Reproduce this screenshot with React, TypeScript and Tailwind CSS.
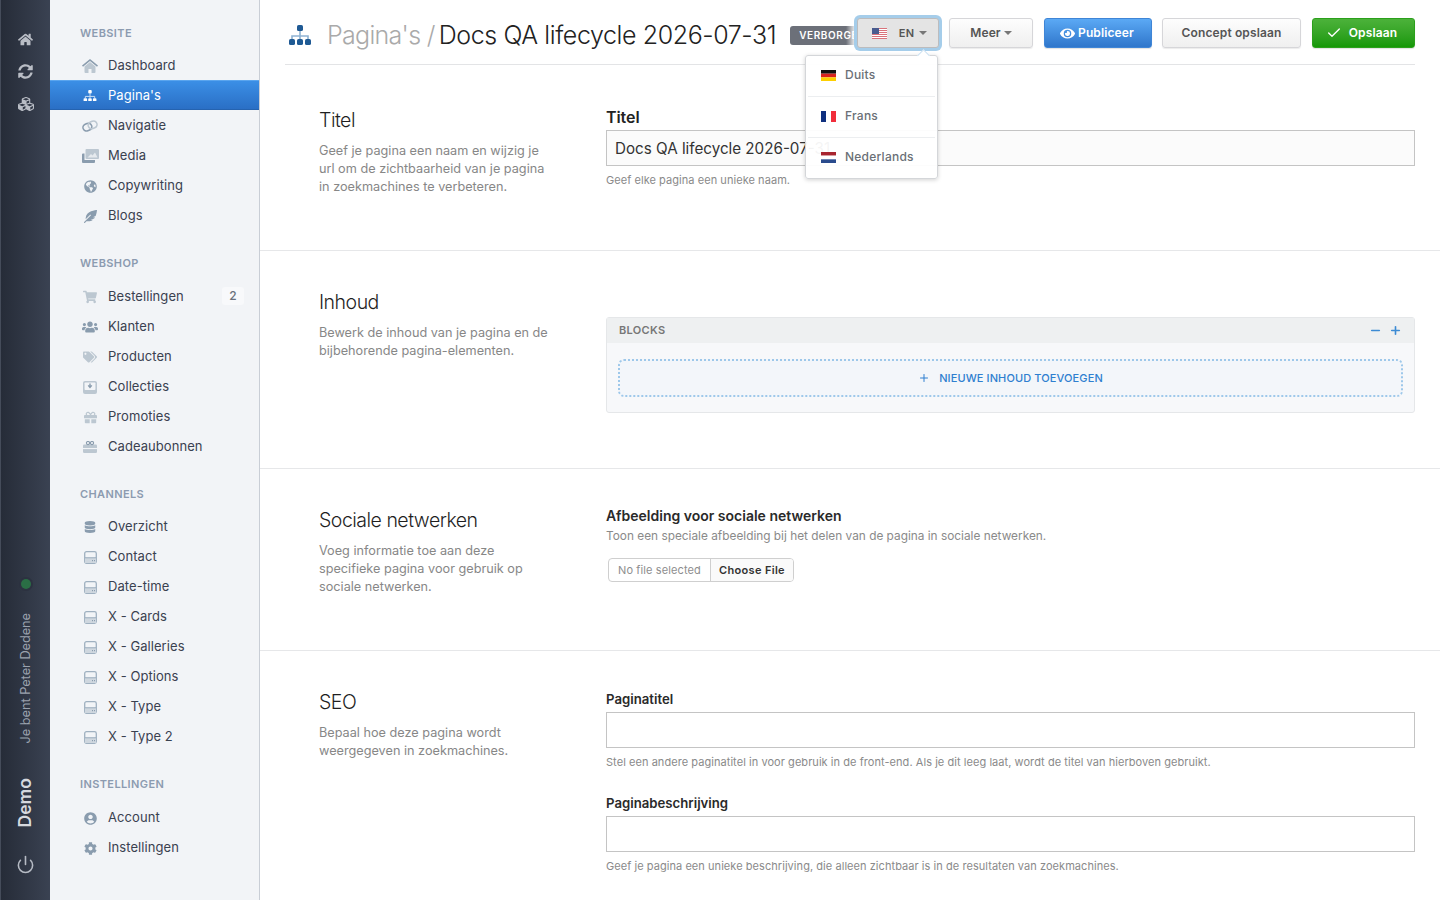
import React from "react";
import { FaHome, FaSyncAlt, FaCubes, FaGlobeAmericas, FaFeatherAlt, FaShoppingCart, FaUsers, FaTags, FaGift, FaUserCircle, FaCog, FaDatabase, FaEye } from "react-icons/fa";
import { FiPower, FiCheck, FiPlus, FiMinus } from "react-icons/fi";

const D = "#8a9cae";
const L = "#bcc7d1";

function Sitemap({ top = "#1f5a94", line = "#8fb3d3", size = 24 }: { top?: string; line?: string; size?: number }) {
  return (
    <svg width={size} height={(size * 20) / 24} viewBox="0 0 24 20">
      <path d="M12 6v5M4 14v-3h16v3M12 11v3" fill="none" stroke={line} strokeWidth="1.6" />
      <rect x="9" y="0" width="6" height="6" rx="1.6" fill={top} />
      <rect x="1" y="14" width="6" height="6" rx="1.6" fill={top} />
      <rect x="9" y="14" width="6" height="6" rx="1.6" fill={top} />
      <rect x="17" y="14" width="6" height="6" rx="1.6" fill={top} />
    </svg>
  );
}
function DuoHome() {
  return (
    <svg width="16" height="14" viewBox="0 0 16 14">
      <path d="M2.5 7.5 8 3l5.5 4.5V13a1 1 0 0 1-1 1h-3v-4h-3v4h-3a1 1 0 0 1-1-1z" fill={L} />
      <path d="M8 0 0 6.5l1 1.2L8 2l7 5.7 1-1.2z" fill={D} />
    </svg>
  );
}
function DuoLink() {
  return (
    <svg width="16" height="12" viewBox="0 0 16 12" fill="none">
      <rect x="0.9" y="3.6" width="9" height="7" rx="3.5" transform="rotate(-22 5.4 7.1)" stroke={D} strokeWidth="1.5" />
      <rect x="6.1" y="1.4" width="9" height="7" rx="3.5" transform="rotate(-22 10.6 4.9)" stroke={L} strokeWidth="1.5" />
    </svg>
  );
}
function DuoImages() {
  return (
    <svg width="17" height="14" viewBox="0 0 17 14">
      <rect x="3.5" y="0" width="13.5" height="10" rx="1" fill={L} />
      <path d="M5.5 8.5 9 5l1.5 1.5L13 3.5l2.5 5z" fill="#e6eaee" />
      <path d="M0 5.5a1 1 0 0 1 1-1h1.5V11h10.5v2a1 1 0 0 1-1 1H1a1 1 0 0 1-1-1z" fill={D} />
    </svg>
  );
}
function DuoInbox() {
  return (
    <svg width="14" height="13" viewBox="0 0 14 13">
      <rect x="0" y="0" width="14" height="13" rx="2" fill={L} />
      <rect x="1.6" y="1.4" width="10.8" height="7.6" rx="0.8" fill="#f2f4f7" />
      <path d="M7 2.6v3M5.2 4.4 7 6.4l1.8-2" stroke={D} strokeWidth="1.4" fill="none" />
    </svg>
  );
}
function DuoVoucher() {
  return (
    <svg width="14" height="12" viewBox="0 0 14 12">
      <rect x="0" y="3.4" width="14" height="8.6" rx="1.2" fill={L} />
      <rect x="0" y="7" width="14" height="1.1" fill="#f2f4f7" />
      <circle cx="5" cy="2" r="1.6" fill="none" stroke={D} strokeWidth="1.1" />
      <circle cx="9" cy="2" r="1.6" fill="none" stroke={D} strokeWidth="1.1" />
    </svg>
  );
}
function Hdd() {
  return (
    <svg width="13" height="13" viewBox="0 0 13 13">
      <rect x="0.7" y="0.7" width="11.6" height="11.6" rx="1.8" fill="none" stroke="#9fb0c0" strokeWidth="1.3" />
      <rect x="1" y="7" width="11" height="5" fill="#cfd7df" />
      <rect x="1" y="6.2" width="11" height="1.1" fill="#9fb0c0" />
      <rect x="8" y="9" width="1" height="1.2" fill="#8a9cae" />
      <rect x="10" y="9" width="1" height="1.2" fill="#8a9cae" />
    </svg>
  );
}

const fa = (I: React.ComponentType<{ size?: number; color?: string }>, size = 14, color = D) => <I size={size} color={color} />;

const groups: { title: string; mb: string; items: { label: string; icon: React.ReactNode; active?: boolean; badge?: string }[] }[] = [
  {
    title: "WEBSITE",
    mb: "mb-[8px]",
    items: [
      { label: "Dashboard", icon: <DuoHome /> },
      { label: "Pagina's", icon: <Sitemap top="#ffffff" line="#cfe2f6" size={14} />, active: true },
      { label: "Navigatie", icon: <DuoLink /> },
      { label: "Media", icon: <DuoImages /> },
      { label: "Copywriting", icon: fa(FaGlobeAmericas, 13) },
      { label: "Blogs", icon: fa(FaFeatherAlt, 13) },
    ],
  },
  {
    title: "WEBSHOP",
    mb: "mb-[9px]",
    items: [
      { label: "Bestellingen", icon: fa(FaShoppingCart, 14, L), badge: "2" },
      { label: "Klanten", icon: fa(FaUsers, 16) },
      { label: "Producten", icon: fa(FaTags, 14, L) },
      { label: "Collecties", icon: <DuoInbox /> },
      { label: "Promoties", icon: fa(FaGift, 13, L) },
      { label: "Cadeaubonnen", icon: <DuoVoucher /> },
    ],
  },
  {
    title: "CHANNELS",
    mb: "mb-[8px]",
    items: [
      { label: "Overzicht", icon: fa(FaDatabase, 12) },
      { label: "Contact", icon: <Hdd /> },
      { label: "Date-time", icon: <Hdd /> },
      { label: "X - Cards", icon: <Hdd /> },
      { label: "X - Galleries", icon: <Hdd /> },
      { label: "X - Options", icon: <Hdd /> },
      { label: "X - Type", icon: <Hdd /> },
      { label: "X - Type 2", icon: <Hdd /> },
    ],
  },
  {
    title: "INSTELLINGEN",
    mb: "mb-[9px]",
    items: [
      { label: "Account", icon: fa(FaUserCircle, 13) },
      { label: "Instellingen", icon: fa(FaCog, 13) },
    ],
  },
];

function Rail() {
  return (
    <div className="w-[50px] shrink-0 h-full flex flex-col items-center bg-gradient-to-r from-[#262c38] to-[#3a4252] border-l border-[#454c5a] pt-[32px] pb-[26px]">
      <div className="flex flex-col items-center gap-[17px] text-[#b9bdc5]">
        <FaHome size={15} />
        <FaSyncAlt size={15} />
        <FaCubes size={16} />
      </div>
      <div className="mt-auto ml-[1px] w-[10px] h-[10px] rounded-full bg-[#2a6e45] ring-2 ring-[#2c3240]" />
      <div className="mt-[24px] text-[12.7px] text-[#9ba2ae] [writing-mode:vertical-rl] rotate-180 whitespace-nowrap leading-[14px]">Je bent Peter Dedene</div>
      <div className="mt-[34px] -ml-[1px] text-[17.5px] font-semibold text-[#d6d9de] [writing-mode:vertical-rl] rotate-180 leading-[20px]">Demo</div>
      <div className="mt-[28px] text-[#b6bbc4]"><FiPower size={19} /></div>
    </div>
  );
}

function Sidebar() {
  return (
    <div className="w-[210px] shrink-0 h-full bg-[#f2f4f7] border-r border-[#c9ced6] pt-[24px]">
      <div className="flex flex-col gap-[24px]">
        {groups.map((g) => (
          <div key={g.title}>
            <div className={`h-[18px] leading-[18px] pl-[30px] text-[11px] font-semibold tracking-[0.035em] text-[#8c9bb0] ${g.mb}`}>{g.title}</div>
            {g.items.map((it) => (
              <div
                key={it.label}
                className={
                  it.active
                    ? "h-[30px] flex items-center pl-[31px] pt-[1px] border-t border-b border-t-[#5aa5ee] border-b-[#2563b0] bg-gradient-to-b from-[#3b8fe6] to-[#2a6fc5] text-white"
                    : "h-[30px] flex items-center pl-[31px] pt-[2px] text-[#3a4150]"
                }
              >
                <span className="w-[18px] flex justify-center mr-[9px]">{it.icon}</span>
                <span className="text-[13px] tracking-[0.005em] flex-1">{it.label}</span>
                {it.badge && (
                  <span className="mr-[15px] w-[22px] h-[18px] -mt-[2px] rounded-[3px] bg-[#f8f9fb] text-[12px] font-medium text-[#6a717c] flex items-center justify-center">{it.badge}</span>
                )}
              </div>
            ))}
          </div>
        ))}
      </div>
    </div>
  );
}

const Caret = ({ color = "#777" }: { color?: string }) => (
  <span className="inline-block w-0 h-0 border-l-[4px] border-r-[4px] border-t-[4px] border-l-transparent border-r-transparent" style={{ borderTopColor: color }} />
);

function FlagUS() {
  return (
    <svg width="15" height="11" viewBox="0 0 15 11">
      <rect width="15" height="11" fill="#fff" />
      {[0, 2, 4, 6, 8, 10].map((y) => (
        <rect key={y} y={y} width="15" height="1" fill="#d9737b" />
      ))}
      <rect width="7" height="6" fill="#4a5c8f" />
    </svg>
  );
}
function FlagH({ a, b, c }: { a: string; b: string; c: string }) {
  return (
    <svg width="15" height="11" viewBox="0 0 15 11">
      <rect width="15" height="3.67" fill={a} />
      <rect y="3.67" width="15" height="3.67" fill={b} />
      <rect y="7.33" width="15" height="3.67" fill={c} />
    </svg>
  );
}
function FlagFR() {
  return (
    <svg width="15" height="11" viewBox="0 0 15 11">
      <rect width="5" height="11" fill="#10307f" />
      <rect x="5" width="5" height="11" fill="#fff" />
      <rect x="10" width="5" height="11" fill="#f12d3b" />
    </svg>
  );
}

function LangMenu() {
  const rows = [
    { l: "Duits", f: <FlagH a="#111" b="#d8231f" c="#fdcf00" /> },
    { l: "Frans", f: <FlagFR /> },
    { l: "Nederlands", f: <FlagH a="#a8252f" b="#fff" c="#2a4b8d" /> },
  ];
  return (
    <div className="absolute z-20 right-[1px] top-[37px] w-[133px] bg-white/95 border border-[#d4d6d9] rounded-[3px] shadow-[0_1px_4px_rgba(0,0,0,0.18)]">
      <div className="absolute -top-[5px] right-[9px] w-[9px] h-[9px] rotate-45 bg-white border-l border-t border-[#c9dff0]" />
      {rows.map((r, i) => (
        <div key={r.l} className="mx-[2px]">
          {i > 0 && <div className="h-px bg-[#eceef0]" />}
          <div className="h-[40px] pb-[2px] flex items-center pl-[13px] gap-[9px] text-[12px] font-medium tracking-[0.02em] text-[#6a6f76]">
            {r.f}
            <span>{r.l}</span>
          </div>
        </div>
      ))}
    </div>
  );
}

const btnBase = "h-[30px] rounded-[3px] flex items-center justify-center text-[12px] font-semibold tracking-[0.01em] shrink-0";
const btnGray = `${btnBase} bg-gradient-to-b from-[#fdfdfd] to-[#efefef] border border-[#d6d6d9] text-[#555] shadow-[0_1px_1px_rgba(0,0,0,0.08)]`;

function Header() {
  return (
    <div className="h-[65px] mx-[25px] border-b border-[#e3e4e6] flex items-start pt-[18px] shrink-0">
      <div className="relative flex-1 min-w-0 h-[34px] overflow-hidden flex items-center pl-[3px]">
        <span className="shrink-0"><Sitemap /></span>
        <span className="ml-[15px] text-[25px] font-light text-[#aaaaaa] -tracking-[0.7px] whitespace-nowrap leading-[34px]">Pagina's / </span>
        <span className="ml-[4px] text-[25px] font-light text-[#222222] -tracking-[0.4px] whitespace-nowrap leading-[34px]">Docs QA lifecycle 2026-07-31</span>
        <span className="ml-[14px] mt-[1px] h-[19px] px-[9px] rounded-[3px] bg-[#6c7079] text-white text-[10px] font-semibold tracking-[0.06em] flex items-center shrink-0">VERBORGEN</span>
        <div className="absolute right-0 top-0 h-full w-[10px] bg-gradient-to-r from-transparent to-white" />
      </div>
      <div className="relative shrink-0 ml-[1px]">
        <div className={`${btnBase} w-[82px] bg-[#e4e4e4] border border-[#bcbcbe] text-[#555] ring-[3px] ring-[#a5cdea] gap-[5px]`}>
          <span className="ml-[3px] flex"><FlagUS /></span>
          <span className="ml-[7px] text-[11px]">EN</span>
          <Caret />
        </div>
        <LangMenu />
      </div>
      <div className={`${btnGray} w-[84px] ml-[10px] gap-[3px]`}>Meer <Caret /></div>
      <div className={`${btnBase} w-[108px] ml-[11px] gap-[3px] pr-[2px] bg-gradient-to-b from-[#5ba9f5] to-[#2f76cb] text-white border border-[#3f85d6] shadow-[0_1px_1px_rgba(0,0,0,0.12)]`}>
        <FaEye size={15} /> Publiceer
      </div>
      <div className={`${btnGray} w-[139px] ml-[10px]`}>Concept opslaan</div>
      <div className={`${btnBase} w-[103px] ml-[11px] gap-[7px] pr-[4px] bg-gradient-to-b from-[#4cb23a] to-[#149805] text-white border border-[#2ba01b] shadow-[0_1px_1px_rgba(0,0,0,0.12)]`}>
        <FiCheck size={16} /> Opslaan
      </div>
    </div>
  );
}

function Section({ title, text, className, children }: { title: string; text: React.ReactNode; className: string; children: React.ReactNode }) {
  return (
    <div className={`flex border-b border-[#e6e7e9] pl-[59px] pr-[25px] ${className}`}>
      <div className="w-[287px] shrink-0">
        <div className="text-[19.5px] font-light text-[#1f1f1f] leading-[28px] -tracking-[0.5px]">{title}</div>
        <div className="mt-[8px] w-[235px] text-[12.7px] leading-[18px] text-[#878787]">{text}</div>
      </div>
      <div className="flex-1 min-w-0">{children}</div>
    </div>
  );
}

const inputCls = "h-[36px] w-full border border-[#c4c4c4] bg-[#fbfbfb]";
const helpCls = "text-[11px] leading-[14px] tracking-[0.005em] text-[#8a8a8a]";

export default function App() {
  return (
    <div className="h-screen w-full flex overflow-hidden bg-white font-['Inter','Liberation_Sans',sans-serif]">
      <Rail />
      <Sidebar />
      <div className="flex-1 min-w-0 h-full overflow-hidden flex flex-col">
        <Header />
        <Section title="Titel" className="pt-[41px] h-[186px]" text="Geef je pagina een naam en wijzig je url om de zichtbaarheid van je pagina in zoekmachines te verbeteren.">
          <div className="mb-[2px] text-[16px] font-semibold text-[#222] leading-[22px] -tracking-[0.005em]">Titel</div>
          <div className={`${inputCls} px-[8px] pt-[2px] flex items-center text-[15.2px] text-[#333] whitespace-nowrap overflow-hidden`}>Docs QA lifecycle 2026-07-31</div>
          <div className={`${helpCls} mt-[7px]`}>Geef elke pagina een unieke naam.</div>
        </Section>
        <Section title="Inhoud" className="pt-[37px] h-[218px]" text="Bewerk de inhoud van je pagina en de bijbehorende pagina-elementen.">
          <div className="mt-[29px] border border-[#e5e7e9] rounded-[3px] bg-[#f7f8fa] h-[96px]">
            <div className="h-[25px] bg-[#eef0f1] flex items-center justify-between pl-[12px] pr-[12px] text-[11px] font-semibold tracking-[0.03em] text-[#777]">
              BLOCKS
              <span className="flex items-center gap-[7px] text-[#3d8bd4]"><FiMinus size={13} strokeWidth={3} /><FiPlus size={13} strokeWidth={3} /></span>
            </div>
            <div className="mx-[11px] mt-[16px] h-[38px] rounded-[6px] border-2 border-dotted border-[#9ec8ea] bg-[#f3f6fa] flex items-center justify-center gap-[9px] text-[11px] font-medium tracking-[0.01em] text-[#2f7fd0]">
              <FiPlus size={12} /> NIEUWE INHOUD TOEVOEGEN
            </div>
          </div>
        </Section>
        <Section title="Sociale netwerken" className="pt-[37px] h-[182px]" text="Voeg informatie toe aan deze specifieke pagina voor gebruik op sociale netwerken.">
          <div className="text-[14px] font-semibold text-[#2a2a2a] leading-[20px]">Afbeelding voor sociale netwerken</div>
          <div className="mt-[1px] text-[11.85px] leading-[18px] text-[#8a8a8a]">Toon een speciale afbeelding bij het delen van de pagina in sociale netwerken.</div>
          <div className="mt-[13px] ml-[2px] flex w-[186px] h-[24px] border border-[#cfcfcf] rounded-[4px] text-[11px] overflow-hidden">
            <div className="w-[102px] flex items-center justify-center tracking-[0.01em] text-[#8e8e8e] border-r border-[#cfcfcf]">No file selected</div>
            <div className="flex-1 flex items-center justify-center font-semibold tracking-[0.03em] text-[#333] bg-[#fafafa]">Choose File</div>
          </div>
        </Section>
        <div className="flex pl-[59px] pr-[25px] pt-[37px]">
          <div className="w-[287px] shrink-0">
            <div className="text-[19.5px] font-light text-[#1f1f1f] leading-[28px] -tracking-[0.5px]">SEO</div>
            <div className="mt-[8px] w-[235px] text-[12.7px] leading-[18px] text-[#878787]">Bepaal hoe deze pagina wordt weergegeven in zoekmachines.</div>
          </div>
          <div className="flex-1 min-w-0 pt-[1px]">
            <div className="text-[13.2px] font-semibold text-[#2a2a2a] leading-[20px]">Paginatitel</div>
            <div className={`${inputCls} mt-[3px] bg-white`} />
            <div className={`${helpCls} mt-[7px]`}>Stel een andere paginatitel in voor gebruik in de front-end. Als je dit leeg laat, wordt de titel van hierboven gebruikt.</div>
            <div className="mt-[24px] text-[13.2px] font-semibold text-[#2a2a2a] leading-[20px]">Paginabeschrijving</div>
            <div className={`${inputCls} mt-[3px] bg-white`} />
            <div className={`${helpCls} mt-[7px]`}>Geef je pagina een unieke beschrijving, die alleen zichtbaar is in de resultaten van zoekmachines.</div>
          </div>
        </div>
      </div>
    </div>
  );
}
